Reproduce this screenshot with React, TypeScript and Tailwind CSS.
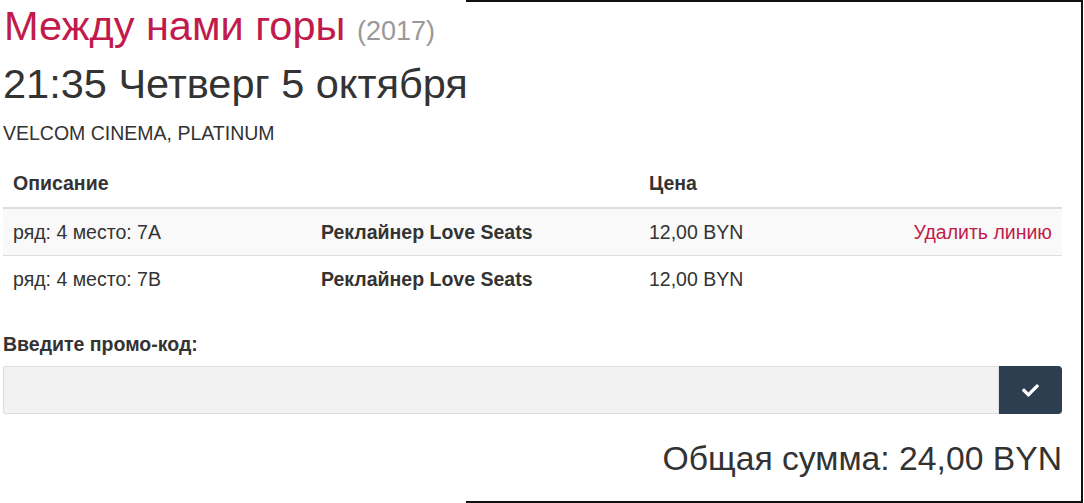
import { FaCheck } from 'react-icons/fa'

interface Line {
  seat: string
  type: string
  price: string
}

const lines: Line[] = [
  { seat: 'ряд: 4 место: 7A', type: 'Реклайнер Love Seats', price: '12,00 BYN' },
  { seat: 'ряд: 4 место: 7B', type: 'Реклайнер Love Seats', price: '12,00 BYN' },
]

const App = () => {
  return (
    <div className="relative w-[1084px] h-[503px] overflow-hidden bg-white text-[#333] font-['Liberation_Sans',Arial,sans-serif]">
      {/* frame of the surrounding panel */}
      <div className="absolute left-[466px] top-0 right-[1px] bottom-0 border-t-2 border-r-2 border-b-2 border-[#111] pointer-events-none" />

      <div className="w-[1062px] pl-[3px]">
        <h1 className="mt-[3px] text-[41.5px] leading-[46px] pl-[1px]">
          <span className="text-[#c11b4b]">Между нами горы</span>{' '}
          <small className="text-[27px] text-[#999]">(2017)</small>
        </h1>
        <h2 className="mt-[7px] text-[41.5px] leading-[46px]">21:35 Четверг 5 октября</h2>
        <p className="mt-[14px] text-[19.5px] leading-[24px] uppercase">Velcom Cinema, Platinum</p>

        <table className="mt-[15px] w-full text-[19.5px] leading-[24px] border-collapse">
          <thead>
            <tr className="border-b-2 border-[#ddd]">
              <th className="text-left font-bold px-[10px] pt-[11px] pb-[12px] w-[308px]">Описание</th>
              <th className="text-left px-[10px] pt-[11px] pb-[12px] w-[328px]"></th>
              <th className="text-left font-bold px-[10px] pt-[11px] pb-[12px]">Цена</th>
              <th className="px-[10px] pt-[11px] pb-[12px]"></th>
            </tr>
          </thead>
          <tbody>
            {lines.map((l, i) => (
              <tr key={l.seat} className={`border-t border-[#ddd] ${i === 0 ? 'bg-[#f9f9f9]' : ''}`}>
                <td className="px-[10px] py-[11px]">{l.seat}</td>
                <td className="px-[10px] py-[11px] font-bold">{l.type}</td>
                <td className="px-[10px] py-[11px]">{l.price}</td>
                <td className="px-[10px] py-[11px] text-right">
                  {i === 0 && <a className="text-[#c11b4b]">Удалить линию</a>}
                </td>
              </tr>
            ))}
          </tbody>
        </table>

        <label className="block mt-[30px] text-[19.5px] leading-[24px] font-bold">Введите промо-код:</label>
        <div className="mt-[10px] flex h-[48px]">
          <input className="flex-1 bg-[#f2f2f2] border border-[#ddd] rounded-l-[2px] outline-none px-3" />
          <button className="w-[63px] bg-[#2c3e50] rounded-r-[4px] flex items-center justify-center text-white">
            <FaCheck className="w-[17px] h-[17px]" />
          </button>
        </div>

        <div className="mt-[25px] text-right text-[33.7px] leading-[38px]">Общая сумма: 24,00 BYN</div>
      </div>
    </div>
  )
}

export default App
